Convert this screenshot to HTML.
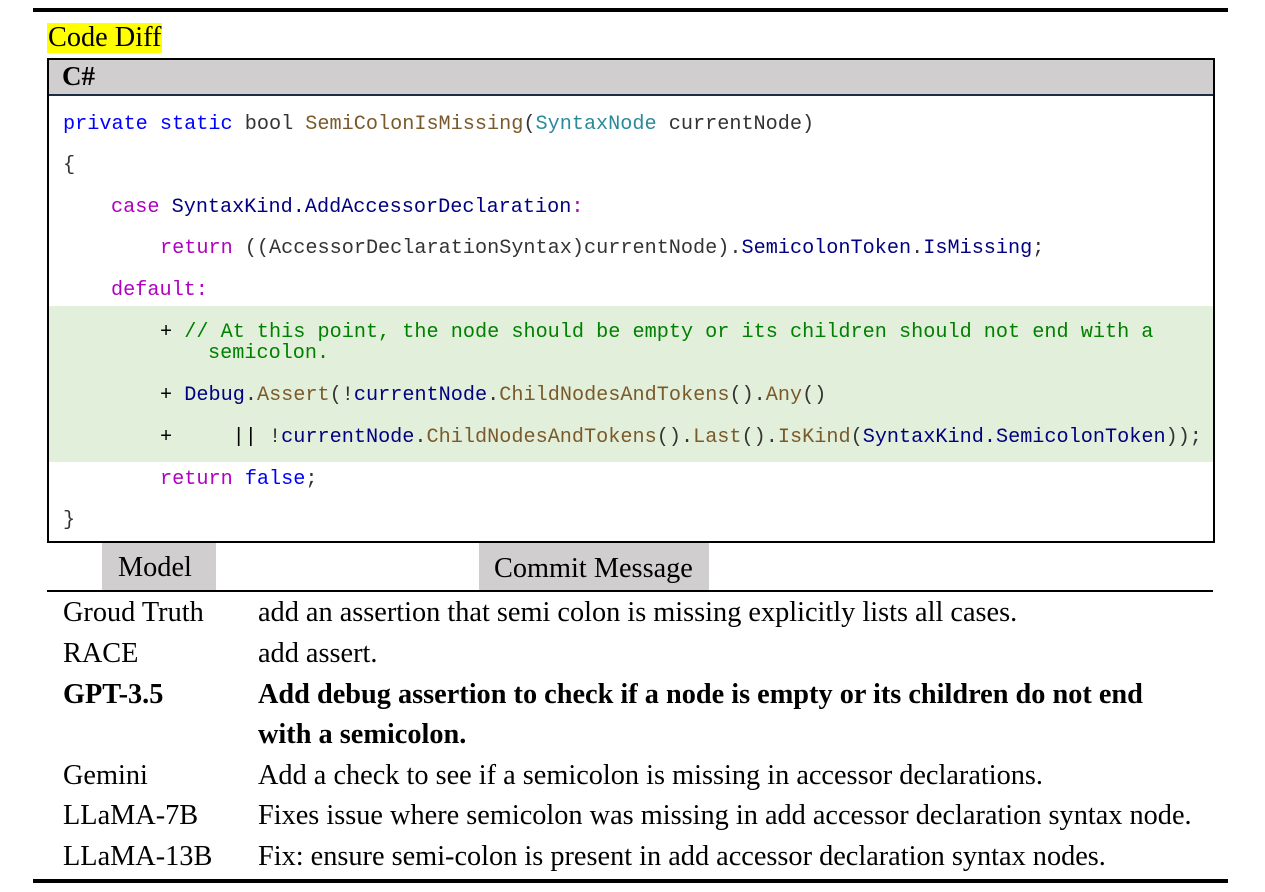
<!DOCTYPE html>
<html><head><meta charset="utf-8"><style>
body{margin:0;width:1265px;height:892px;background:#fff;position:relative;overflow:hidden}
.a{position:absolute}
.m{font-family:"Liberation Mono",monospace;font-size:20.2px;line-height:24px;white-space:pre;color:#333;margin-top:3px}
.s{font-family:"Liberation Serif",serif;font-size:28.3px;line-height:30px;white-space:nowrap;color:#000;margin-top:1px}
.k{color:#0000ff}.p{color:#b000c0}.f{color:#7a5a2a}.t{color:#2b8a9a}.n{color:#000080}.c{color:#008000}.b{color:#000}
</style></head><body>
<div class="a" style="left:33px;top:8px;width:1195px;height:4px;background:#000"></div>
<div class="a s" style="left:47px;top:23px;background:#ffff00;padding:0 1px;height:30px;margin-top:0">Code Diff</div>
<div class="a" style="left:47px;top:58px;width:1164px;height:481px;border:2px solid #000"></div>
<div class="a" style="left:49px;top:60px;width:1164px;height:34px;background:#d0cece;border-bottom:2px solid #1f2d44"></div>
<div class="a s" style="left:62px;top:61px;font-weight:bold;font-size:27px;margin-top:0">C#</div>
<div class="a" style="left:49px;top:306px;width:1164px;height:156px;background:#e2efda"></div>
<div class="a m" style="left:63px;top:110px"><span class="k">private static</span> bool <span class="f">SemiColonIsMissing</span>(<span class="t">SyntaxNode</span> currentNode)</div>
<div class="a m" style="left:63px;top:151px">{</div>
<div class="a m" style="left:111px;top:193px"><span class="p">case</span> <span class="n">SyntaxKind.AddAccessorDeclaration</span><span class="p">:</span></div>
<div class="a m" style="left:160px;top:234px"><span class="p">return</span> ((AccessorDeclarationSyntax)currentNode).<span class="n">SemicolonToken</span>.<span class="n">IsMissing</span>;</div>
<div class="a m" style="left:111px;top:276px"><span class="p">default:</span></div>
<div class="a m" style="left:160px;top:318px"><span class="b">+</span> <span class="c">// At this point, the node should be empty or its children should not end with a</span></div>
<div class="a m c" style="left:208px;top:339px">semicolon.</div>
<div class="a m" style="left:160px;top:381px"><span class="b">+</span> <span class="n">Debug</span>.<span class="f">Assert</span>(!<span class="n">currentNode</span>.<span class="f">ChildNodesAndTokens</span>().<span class="f">Any</span>()</div>
<div class="a m" style="left:160px;top:423px"><span class="b">+     ||</span> !<span class="n">currentNode</span>.<span class="f">ChildNodesAndTokens</span>().<span class="f">Last</span>().<span class="f">IsKind</span>(<span class="n">SyntaxKind.SemicolonToken</span>));</div>
<div class="a m" style="left:160px;top:465px"><span class="p">return</span> <span class="k">false</span>;</div>
<div class="a m" style="left:63px;top:506px">}</div>
<div class="a" style="left:102px;top:543px;width:114px;height:47px;background:#d0cece"></div>
<div class="a s" style="left:118px;top:552px">Model</div>
<div class="a" style="left:479px;top:543px;width:230px;height:47px;background:#d0cece"></div>
<div class="a s" style="left:494px;top:553px">Commit Message</div>
<div class="a" style="left:47px;top:590px;width:1166px;height:2px;background:#000"></div>
<div class="a s" style="left:63px;top:597px">Groud Truth</div><div class="a s" style="left:258px;top:597px">add an assertion that semi colon is missing explicitly lists all cases.</div>
<div class="a s" style="left:63px;top:638px">RACE</div><div class="a s" style="left:258px;top:638px">add assert.</div>
<div class="a s" style="left:63px;top:679px;font-weight:bold">GPT-3.5</div><div class="a s" style="left:258px;top:679px;font-weight:bold">Add debug assertion to check if a node is empty or its children do not end</div>
<div class="a s" style="left:258px;top:719px;font-weight:bold">with a semicolon.</div>
<div class="a s" style="left:63px;top:760px">Gemini</div><div class="a s" style="left:258px;top:760px">Add a check to see if a semicolon is missing in accessor declarations.</div>
<div class="a s" style="left:63px;top:800px">LLaMA-7B</div><div class="a s" style="left:258px;top:800px">Fixes issue where semicolon was missing in add accessor declaration syntax node.</div>
<div class="a s" style="left:63px;top:841px">LLaMA-13B</div><div class="a s" style="left:258px;top:841px">Fix: ensure semi-colon is present in add accessor declaration syntax nodes.</div>
<div class="a" style="left:33px;top:879px;width:1195px;height:4px;background:#000"></div>
</body></html>
